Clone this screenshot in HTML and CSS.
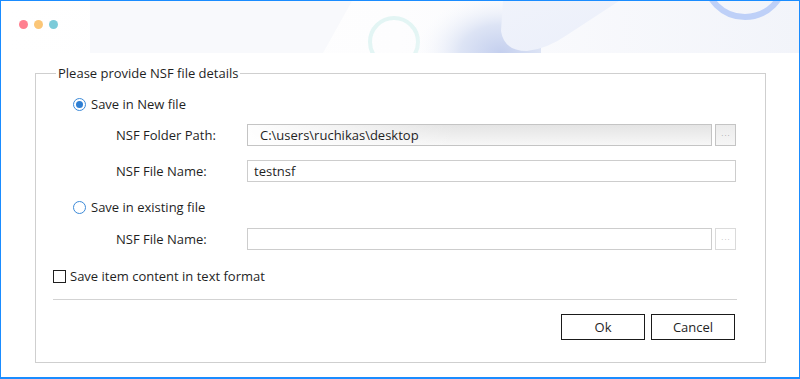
FILE: index.html
```html
<!DOCTYPE html>
<html lang="en">
<head>
    <meta charset="UTF-8">
    <meta name="viewport" content="width=device-width, initial-scale=1.0">
    <title>Export to NSF</title>
    <link rel="stylesheet" href="styles.css">
</head>
<body>
    <div class="window">
        <div class="titlebar">
            <svg class="titlebar-art" width="798" height="52" viewBox="0 0 798 52">
                <defs>
                    <linearGradient id="bg" x1="0" y1="0" x2="1" y2="0">
                        <stop offset="0" stop-color="#ffffff"/>
                        <stop offset="0.5" stop-color="#fdfdfe"/>
                        <stop offset="1" stop-color="#f2f4fa"/>
                    </linearGradient>
                    <radialGradient id="shade" cx="500" cy="52" r="90" gradientUnits="userSpaceOnUse" gradientTransform="translate(500 52) scale(1 0.7) translate(-500 -52)">
                        <stop offset="0" stop-color="#c4cfee"/>
                        <stop offset="0.45" stop-color="#dde4f5"/>
                        <stop offset="1" stop-color="#ffffff" stop-opacity="0"/>
                    </radialGradient>
                    <linearGradient id="blob" x1="0" y1="0" x2="1" y2="1">
                        <stop offset="0" stop-color="#f0f3fb"/>
                        <stop offset="1" stop-color="#ebeffa"/>
                    </linearGradient>
                </defs>
                <rect width="798" height="52" fill="url(#bg)"/>
                <polygon points="89,0 351,0 322,52 89,52" fill="#f8f9fc"/>
                <circle cx="393" cy="41" r="24" fill="none" stroke="#e3f5f4" stroke-width="4"/>
                <rect x="410" y="0" width="130" height="52" fill="url(#shade)"/>
                <path d="M502 0 L618 0 L566 34 Q546 48 526 50 Q503 50 500 30 Z" fill="url(#blob)"/>
                <circle cx="744" cy="-24" r="40" fill="none" stroke="#bed0f8" stroke-width="6"/>
            </svg>
            <span class="dot dot-red"></span>
            <span class="dot dot-yellow"></span>
            <span class="dot dot-teal"></span>
        </div>

        <div class="content">
            <fieldset class="details">
                <legend>Please provide NSF file details</legend>

                <label class="option first">
                    <span class="radio checked"></span>
                    Save in New file
                </label>

                <div class="field field-path">
                    <span class="field-label">NSF Folder Path:</span>
                    <input class="text-box path-box" type="text" value="C:\users\ruchikas\desktop" readonly>
                    <button class="browse browse-active">&middot;&middot;&middot;</button>
                </div>

                <div class="field field-name">
                    <span class="field-label">NSF File Name:</span>
                    <input class="text-box name-box" type="text" value="testnsf">
                </div>

                <label class="option second">
                    <span class="radio"></span>
                    Save in existing file
                </label>

                <div class="field field-existing">
                    <span class="field-label">NSF File Name:</span>
                    <input class="text-box" type="text" value="">
                    <button class="browse">&middot;&middot;&middot;</button>
                </div>

                <label class="check-row">
                    <span class="checkbox"></span>
                    Save item content in text format
                </label>

                <div class="separator"></div>

                <div class="actions">
                    <button class="btn">Ok</button>
                    <button class="btn">Cancel</button>
                </div>
            </fieldset>
        </div>
    </div>
</body>
</html>
```

FILE: styles.css
```css
body {
    margin: 0;
    padding: 0;
    font-family: 'Open Sans', 'Noto Sans', sans-serif;
    font-size: 13px;
    color: #1f1f1f;
    background: #ffffff;
}

.window {
    width: 800px;
    height: 379px;
    box-sizing: border-box;
    border: 1px solid #1a8cff;
    border-bottom-width: 2px;
    background: #ffffff;
    overflow: hidden;
}

.titlebar {
    position: relative;
    height: 52px;
    box-sizing: border-box;
    padding: 19px 0 0 18px;
    display: flex;
    gap: 6px;
}

.titlebar-art {
    position: absolute;
    left: 0;
    top: 0;
}

.dot {
    position: relative;
    width: 9px;
    height: 9px;
    border-radius: 50%;
}

.dot-red {
    background: #ff8090;
}

.dot-yellow {
    background: #fbc677;
}

.dot-teal {
    background: #7ccbd9;
}

.content {
    padding: 12px 33px 0 34px;
}

.details {
    margin: 0;
    padding: 0 0 22px 0;
    border: 1px solid #cfcfcf;
    min-width: 0;
}

.details legend {
    margin-left: 20px;
    padding: 0 2px;
    line-height: 16px;
}

.option {
    display: flex;
    align-items: center;
    height: 20px;
    margin-left: 37px;
}

.option.first {
    margin-top: 13px;
}

.option.second {
    margin-top: 15px;
}

.radio {
    width: 13px;
    height: 13px;
    box-sizing: border-box;
    border: 1px solid #3c8ad8;
    border-radius: 50%;
    margin-right: 5px;
    display: flex;
    align-items: center;
    justify-content: center;
}

.radio.checked::after {
    content: "";
    width: 7px;
    height: 7px;
    border-radius: 50%;
    background: #2f7fd3;
}

.field {
    display: flex;
    align-items: center;
    height: 22px;
    padding-left: 80px;
    margin-right: 29px;
}

.field-path {
    margin-top: 10px;
}

.field-name {
    margin-top: 14px;
}

.field-existing {
    margin-top: 11px;
}

.field-label {
    width: 131px;
    flex-shrink: 0;
}

.text-box {
    flex: 1;
    min-width: 0;
    height: 22px;
    box-sizing: border-box;
    border: 1px solid #cdcdcd;
    padding: 0 6px;
    font-family: inherit;
    font-size: 13px;
    color: #1f1f1f;
    background: #ffffff;
    outline: none;
}

.path-box {
    padding-left: 12px;
    border-color: #c4c4c4;
    background: linear-gradient(to right, rgba(255, 255, 255, 0.95), rgba(255, 255, 255, 0) 45%),
        linear-gradient(#e4e4e4, #f7f7f7);
}

.browse {
    width: 21px;
    height: 22px;
    margin-left: 3px;
    padding: 0 0 0 1px;
    box-sizing: border-box;
    border: 1px solid #dadada;
    background: #ffffff;
    color: #b5b5b5;
    font-size: 8px;
    line-height: 20px;
    letter-spacing: 1px;
    font-family: inherit;
}

.browse-active {
    border-color: #c4c4c4;
    background: linear-gradient(#ececec, #f6f6f6);
    color: #9a9a9a;
}

.check-row {
    display: flex;
    align-items: center;
    height: 20px;
    margin: 16px 0 0 17px;
}

.checkbox {
    width: 13px;
    height: 13px;
    border: 1px solid #1f1f1f;
    margin-right: 4px;
    box-sizing: border-box;
}

.separator {
    height: 1px;
    background: #d3d3d3;
    margin: 13px 28px 0 17px;
}

.actions {
    display: flex;
    justify-content: flex-end;
    gap: 6px;
    margin: 14px 30px 0 0;
}

.btn {
    width: 84px;
    height: 26px;
    box-sizing: border-box;
    border: 1px solid #1a1a1a;
    background: #ffffff;
    font-family: inherit;
    font-size: 13px;
    color: #1f1f1f;
    padding: 0;
}
```
